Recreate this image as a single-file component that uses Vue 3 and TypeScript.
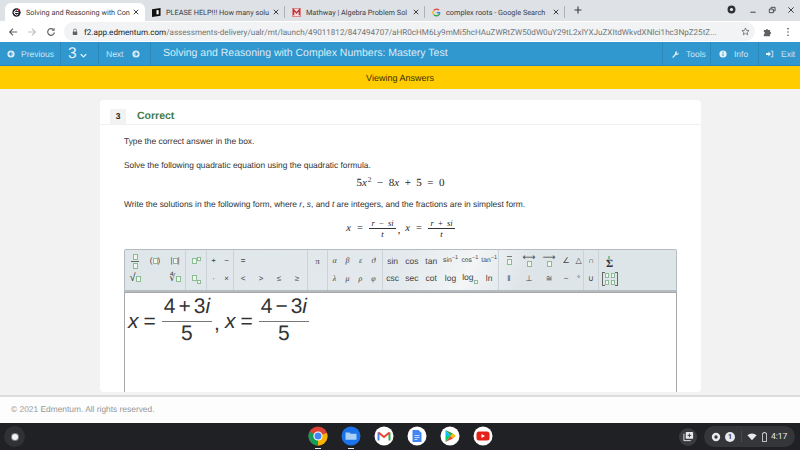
<template>
  <div class="screen">
    <!-- browser tabs -->
    <div class="tabstrip">
      <div v-for="(t, i) in tabs" :key="t.title" class="tab" :class="{ active: i === 0 }">
        <svg class="fav" viewBox="0 0 10 10">
          <template v-if="t.icon === 'e'">
            <circle cx="5" cy="5" r="4.600" fill="#1d1d2b" />
            <path d="M2.800 5h4.400M7 3.400A2.600 2.600 0 1 0 7 6.800" fill="none" stroke="#fff" stroke-width="1.100" />
            <circle cx="7.600" cy="2" r="1.200" fill="#d33" />
          </template>
          <template v-else-if="t.icon === 'book'">
            <path d="M0 1.500 9.500 0v8.500L0 10z" fill="#111" />
            <rect x="5" y="2.400" width="2.400" height="4.600" fill="#fff" />
          </template>
          <template v-else-if="t.icon === 'm'">
            <rect x=".3" y=".3" width="9.400" height="9.400" rx="1" fill="#f6dcdc" stroke="#c4343a" stroke-width=".7" />
            <path d="M1.800 8V2L5 5.500 8.200 2v6" fill="none" stroke="#c4343a" stroke-width="1.500" />
          </template>
          <template v-else>
            <path d="M9 5.200H5.200" fill="none" stroke="#4285f4" stroke-width="1.600" />
            <path d="M8.700 5.200A3.800 3.800 0 0 1 2.200 7.500" fill="none" stroke="#34a853" stroke-width="1.600" />
            <path d="M2.200 7.500a3.800 3.800 0 0 1 0-5" fill="none" stroke="#fbbc05" stroke-width="1.600" />
            <path d="M2.200 2.500A3.800 3.800 0 0 1 7.700 2.300" fill="none" stroke="#ea4335" stroke-width="1.600" />
          </template>
        </svg>
        <span class="tab-title">{{ t.title }}</span>
        <svg class="tab-x" viewBox="0 0 8 8"><path d="M1 1l6 6M7 1 1 7" stroke="#2a2b2e" stroke-width="1.200" /></svg>
      </div>
      <svg class="newtab" viewBox="0 0 9 9"><path d="M4.500 .5v8M.5 4.500h8" stroke="#3c4043" stroke-width="1.300" /></svg>
      <div class="winctl">
        <svg class="profile" viewBox="0 0 10 10">
          <circle cx="5" cy="5" r="4.400" fill="#2f3033" />
          <circle cx="5" cy="5" r="1.800" fill="#e8eaed" />
        </svg>
        <svg class="wbtn" viewBox="0 0 9 9"><path d="M1.500 7h6" stroke="#3c4043" stroke-width="1.100" /></svg>
        <svg class="wbtn" viewBox="0 0 9 9"><path d="M1.500 3.500h4.500v4h-4.500zM3.500 3.500v-2h4.500v4h-2" fill="none" stroke="#3c4043" stroke-width="1" /></svg>
        <svg class="wbtn" viewBox="0 0 9 9"><path d="M1.500 1.500l6 6M7.500 1.500l-6 6" stroke="#3c4043" stroke-width="1.100" /></svg>
      </div>
    </div>

    <!-- address bar -->
    <div class="toolbar">
      <svg class="nav" viewBox="0 0 12 12"><path d="M11 6H2M6 2 2 6l4 4" fill="none" stroke="#5f6368" stroke-width="1.400" /></svg>
      <svg class="nav" viewBox="0 0 12 12"><path d="M1 6h9M6 2l4 4-4 4" fill="none" stroke="#bdc1c6" stroke-width="1.400" /></svg>
      <svg class="nav" viewBox="0 0 12 12"><path d="M10 6.500A4 4 0 1 1 8.900 3.200" fill="none" stroke="#5f6368" stroke-width="1.400" /><path d="M10.300 1v3.400H6.900z" fill="#5f6368" /></svg>
      <div class="omnibox">
        <svg class="lock" viewBox="0 0 8 10"><path d="M2 4.500V3a2 2 0 0 1 4 0v1.500" fill="none" stroke="#5f6368" stroke-width="1" /><rect x="1" y="4.300" width="6" height="4.700" rx=".6" fill="#5f6368" /></svg>
        <span class="url"><b>f2.app.edmentum.com</b>/assessments-delivery/ualr/mt/launch/49011812/847494707/aHR0cHM6Ly9mMi5hcHAuZWRtZW50dW0uY29tL2xlYXJuZXItdWkvdXNlci1hc3NpZ25tZ...</span>
        <svg class="star" viewBox="0 0 12 12"><path d="M6 1.300 7.400 4.500l3.400.3-2.600 2.200.8 3.400L6 8.600 3 10.400l.8-3.400L1.200 4.800l3.400-.3z" fill="none" stroke="#5f6368" stroke-width="1" /></svg>
      </div>
      <svg class="ext" viewBox="0 0 12 12"><path d="M1 3.500h2.500a1.200 1.200 0 1 1 2.400 0h2.600v2.600a1.200 1.200 0 1 1 0 2.400v2.500H1V8.500a1.200 1.200 0 1 0 0-2.400z" fill="#5f6368" /></svg>
      <svg class="dots" viewBox="0 0 4 12"><circle cx="2" cy="2" r="1" fill="#5f6368" /><circle cx="2" cy="6" r="1" fill="#5f6368" /><circle cx="2" cy="10" r="1" fill="#5f6368" /></svg>
    </div>

    <!-- app header -->
    <div class="appbar">
      <div class="seg prev">
        <svg class="ico" viewBox="0 0 10 10"><circle cx="5" cy="5" r="4.500" fill="#dcecf6" /><path d="M5.500 2.800 3.200 5l2.300 2.200M3.400 5h4" fill="none" stroke="#3097cf" stroke-width="1.300" /></svg>
        <span>Previous</span>
      </div>
      <div class="seg num">
        <span class="big">3</span>
        <svg class="chev" viewBox="0 0 10 7"><path d="M1 1.500 5 5.500 9 1.500" fill="none" stroke="#f0f7fb" stroke-width="1.800" /></svg>
      </div>
      <div class="seg next">
        <span>Next</span>
        <svg class="ico" viewBox="0 0 10 10"><circle cx="5" cy="5" r="4.500" fill="#dcecf6" /><path d="M4.500 2.800 6.800 5 4.500 7.200M6.600 5h-4" fill="none" stroke="#3097cf" stroke-width="1.300" /></svg>
      </div>
      <div class="apptitle">Solving and Reasoning with Complex Numbers: Mastery Test</div>
      <div class="seg tool">
        <svg class="ico" viewBox="0 0 10 10"><path d="M1.500 9.200 5.200 4.800a2.300 2.300 0 0 1 3-3L6.800 3.200l.5 1 1 .4L9.600 3.200a2.400 2.400 0 0 1-3.300 2.800L2.700 9.900z" fill="#e8f3f9" /></svg>
        <span>Tools</span>
      </div>
      <div class="seg tool">
        <svg class="ico" viewBox="0 0 10 10"><circle cx="5" cy="5" r="4.500" fill="#e8f3f9" /><path d="M5 4.300v3.300M5 2v1.300" stroke="#3097cf" stroke-width="1.300" /></svg>
        <span>Info</span>
      </div>
      <div class="seg tool last">
        <svg class="ico" viewBox="0 0 10 10"><path d="M0 3.800h3V1.800L6.300 5 3 8.200V6.200H0zM6 1h3v8H6V8h2V2H6z" fill="#e8f3f9" /></svg>
        <span>Exit</span>
      </div>
    </div>
    <div class="banner">Viewing Answers</div>

    <!-- question -->
    <div class="page">
      <div class="card">
        <div class="card-head">
          <span class="qnum">3</span>
          <span class="status">Correct</span>
        </div>
        <div class="body">
          <p class="l1">Type the correct answer in the box.</p>
          <p class="l2">Solve the following quadratic equation using the quadratic formula.</p>
          <div class="eq">5<i>x</i><sup>2</sup>&nbsp;&nbsp;&minus;&nbsp;&nbsp;8<i>x</i>&nbsp;&nbsp;+&nbsp;&nbsp;5&nbsp;&nbsp;=&nbsp;&nbsp;0</div>
          <p class="l3">Write the solutions in the following form, where <i>r</i>, <i>s</i>, and <i>t</i> are integers, and the fractions are in simplest form.</p>
          <div class="eq form">
            <i>x</i><span class="rel">=</span><span class="frac"><span class="top"><i>r</i>&nbsp;&nbsp;&minus;&nbsp;&nbsp;<i>si</i></span><span class="bot"><i>t</i></span></span><span class="comma">,</span><i>x</i><span class="rel">=</span><span class="frac"><span class="top"><i>r</i>&nbsp;&nbsp;+&nbsp;&nbsp;<i>si</i></span><span class="bot"><i>t</i></span></span>
          </div>

          <!-- equation editor palette -->
          <div class="palette">
            <div v-for="g in groups" :key="g.name" class="group" :class="g.name">
              <span v-for="(c, i) in g.cells" :key="i" class="cell" v-html="c"></span>
            </div>
          </div>
          <div class="answer">
            <span class="ans-x">x</span><span class="ans-op">=</span>
            <span class="ans-frac"><span class="ans-top">4<span class="ans-sign">+</span>3<i>i</i></span><span class="ans-bot">5</span></span>
            <span class="ans-comma">,</span>
            <span class="ans-x">x</span><span class="ans-op">=</span>
            <span class="ans-frac"><span class="ans-top">4<span class="ans-sign">&minus;</span>3<i>i</i></span><span class="ans-bot">5</span></span>
          </div>
        </div>
      </div>
    </div>
    <div class="footer">© 2021 Edmentum. All rights reserved.</div>

    <!-- chromeos shelf -->
    <div class="shelf">
      <span class="launcher"><span></span></span>
      <div class="apps">
        <span class="app on">
          <svg viewBox="0 0 20 20">
            <circle cx="10" cy="10" r="9.500" fill="#db4437" />
            <path d="M10 10 1.800 14.800A9.500 9.500 0 0 0 10 19.500z" fill="#0f9d58" />
            <path d="M10 10 1.800 14.800A9.500 9.500 0 0 1 1.500 5.700z" fill="#0f9d58" />
            <path d="M10 10 19 7A9.500 9.500 0 0 1 10 19.500z" fill="#f4b400" />
            <circle cx="10" cy="10" r="4.600" fill="#fff" />
            <circle cx="10" cy="10" r="3.500" fill="#4285f4" />
          </svg>
        </span>
        <span class="app on">
          <svg viewBox="0 0 20 20">
            <circle cx="10" cy="10" r="9.500" fill="#1a73e8" />
            <path d="M4.500 6.500h4l1.200 1.300h5.800v6h-11z" fill="#a9d1f7" />
          </svg>
        </span>
        <span class="app">
          <svg viewBox="0 0 20 20">
            <circle cx="10" cy="10" r="9.500" fill="#fff" />
            <path d="M4.500 14.500V6.500" stroke="#4285f4" stroke-width="2" />
            <path d="M15.500 14.500V6.500" stroke="#34a853" stroke-width="2" />
            <path d="M4.500 6.500 10 11l5.500-4.500" fill="none" stroke="#ea4335" stroke-width="2" />
          </svg>
        </span>
        <span class="app">
          <svg viewBox="0 0 20 20">
            <circle cx="10" cy="10" r="9.500" fill="#fff" />
            <path d="M5.500 4h6l3 3v9h-9z" fill="#4285f4" />
            <path d="M7.500 9.500h5M7.500 11.500h5M7.500 13.500h3" stroke="#cfe0fc" stroke-width=".9" />
          </svg>
        </span>
        <span class="app">
          <svg viewBox="0 0 20 20">
            <circle cx="10" cy="10" r="9.500" fill="#fff" />
            <path d="M5.500 4v6h5z" fill="#00c3ff" />
            <path d="M5.500 16v-6h5z" fill="#00d36b" />
            <path d="M5.500 4l5 6 2.500-2.600z" fill="#34a853" />
            <path d="M5.500 16l5-6 2.500 2.600z" fill="#ea4335" />
            <path d="M13 7.400 16 10l-3 2.600L10.500 10z" fill="#fbbc05" />
          </svg>
        </span>
        <span class="app">
          <svg viewBox="0 0 20 20">
            <circle cx="10" cy="10" r="9.500" fill="#fff" />
            <rect x="3.500" y="5.500" width="13" height="9" rx="2.500" fill="#e62117" />
            <path d="M8.500 8v4l3.500-2z" fill="#fff" />
          </svg>
        </span>
      </div>
      <div class="tray">
        <span class="holding">
          <svg viewBox="0 0 12 12"><path d="M1 3v7.500h7.500" fill="none" stroke="#e8eaed" stroke-width="1" /><rect x="3" y="1" width="8" height="7.500" rx="1" fill="#e8eaed" /><path d="M7 2.800v4M5 4.800h4" stroke="#35363a" stroke-width="1" /></svg>
        </span>
        <div class="pill">
          <svg class="tray-ic" viewBox="0 0 12 12"><circle cx="6" cy="6" r="5" fill="#e8eaed" /><circle cx="6" cy="6" r="2" fill="#35363a" /></svg>
          <span class="badge">1</span>
          <span class="tray-sep"></span>
          <svg class="tray-ic" viewBox="0 0 12 12"><path d="M.5 4A8 8 0 0 1 11.500 4L6 10z" fill="#e8eaed" /></svg>
          <svg class="batt" viewBox="0 0 6 12"><path d="M2 .5h2v1h1.500v10h-5v-10H2z" fill="none" stroke="#e8eaed" stroke-width="1" /></svg>
          <span class="clock">4:17</span>
        </div>
      </div>
    </div>
  </div>
</template>

<script setup lang="ts">
interface Tab {
  title: string
  icon: 'e' | 'book' | 'm' | 'g'
}

// titles stop where the tab fades them out
const tabs: Tab[] = [
  { title: 'Solving and Reasoning with Con', icon: 'e' },
  { title: 'PLEASE HELP!!! How many solu', icon: 'book' },
  { title: 'Mathway | Algebra Problem Sol', icon: 'm' },
  { title: 'complex roots - Google Search', icon: 'g' }
]

// placeholder box used all over the palette
const ph = '<b class="ph"></b>'

const groups = [
  {
    name: 'g-frac',
    cells: [
      `<span class="mini-frac">${ph}<em></em>${ph}</span>`,
      `(${ph})`,
      `|${ph}|`,
      `<span class="root">√</span>${ph}`,
      '',
      `<small>∜</small>${ph}`
    ]
  },
  { name: 'g-pow', cells: [`${ph}<sup>${ph}</sup>`, `${ph}<sub>${ph}</sub>`] },
  { name: 'g-ops', cells: ['+', '−', '·', '×'] },
  { name: 'g-rel', cells: ['=', '', '', '', '&lt;', '&gt;', '≤', '≥'] },
  { name: 'g-pi', cells: ['π', ''] },
  { name: 'g-greek', cells: ['α', 'β', 'ε', 'ϑ', 'λ', 'μ', 'ρ', 'φ'] },
  {
    name: 'g-trig',
    cells: [
      'sin', 'cos', 'tan',
      'sin<sup>−1</sup>', 'cos<sup>−1</sup>', 'tan<sup>−1</sup>',
      'csc', 'sec', 'cot', 'log', `log<sub>${ph}</sub>`, 'ln'
    ]
  },
  {
    name: 'g-geo',
    cells: [
      `<span class="over">${ph}</span>`,
      `<span class="arr">⟷<br>${ph}</span>`,
      `<span class="arr">⟶<br>${ph}</span>`,
      '∠', '△',
      '‖', '⊥', '≅', '~', '°'
    ]
  },
  { name: 'g-set', cells: ['∩', '∪'] },
  {
    name: 'g-mat',
    cells: [
      `<span class="sigma"><b class="ph"></b>Σ</span>`,
      `<span class="matrix">${ph}${ph}${ph}${ph}</span>`
    ]
  }
]
</script>

<style>
html, body { margin: 0; background: #fff; overflow: hidden; }
.cell .ph {
  display: inline-block;
  box-sizing: border-box;
  width: 5px;
  height: 6px;
  border: 1px solid #8dbb93;
  background: #f0f6ef;
  vertical-align: -1px;
}
.cell sup, .cell sub { font-size: 5.500px; line-height: 0; }
.cell sup .ph, .cell sub .ph { width: 4px; height: 4px; }
.cell .mini-frac { display: inline-flex; flex-direction: column; align-items: center; gap: 1px; }
.cell .mini-frac em { width: 8px; height: 1px; background: #666; }
.cell .root { font-size: 11px; color: #333; }
.cell small { font-size: 10px; }
.cell .arr { display: inline-block; font-size: 9px; line-height: 6px; text-align: center; }
.cell .over { display: inline-block; border-top: 1px solid #777; padding-top: 1px; line-height: 8px; }
.cell .sigma {
  display: inline-flex;
  flex-direction: column;
  align-items: center;
  font: bold 11px/9px "Liberation Serif", serif;
  color: #333;
}
.cell .sigma .ph { width: 2px; height: 3px; margin-bottom: 1px; }
.cell .matrix {
  position: relative;
  display: inline-grid;
  grid-template-columns: 1fr 1fr;
  gap: 2px 2px;
  padding: 1px 2px;
  border-left: 1px solid #666;
  border-right: 1px solid #666;
}
.cell .matrix::before, .cell .matrix::after {
  content: "";
  position: absolute;
  top: 0;
  bottom: 0;
  width: 2px;
  border-top: 1px solid #666;
  border-bottom: 1px solid #666;
}
.cell .matrix::before { left: 0; }
.cell .matrix::after { right: 0; }
.cell .matrix .ph { width: 4px; height: 5px; }
</style>

<style scoped>
.screen {
  width: 800px;
  height: 450px;
  display: flex;
  flex-direction: column;
  overflow: hidden;
  font-family: "Liberation Sans", Arial, sans-serif;
  text-rendering: geometricPrecision;
}

/* browser chrome */
.tabstrip {
  height: 21px;
  flex: none;
  display: flex;
  align-items: flex-end;
  padding-left: 5px;
  background: #dee1e6;
  font-family: Roboto, sans-serif;
}
.tab {
  width: 140px;
  height: 18px;
  flex: none;
  box-sizing: border-box;
  display: flex;
  align-items: center;
  padding-left: 7px;
  position: relative;
}
.tab:not(.active)::after {
  content: "";
  position: absolute;
  right: 0;
  top: 3px;
  height: 12px;
  width: 1px;
  background: #aeb1b6;
}
.tab.active { background: #fff; border-radius: 6px 6px 0 0; }
.fav { width: 9px; height: 9px; flex: none; margin-right: 5px; }
.tab-title {
  width: 102px;
  flex: none;
  font-size: 7.300px;
  color: #3c4043;
  white-space: nowrap;
}
.tab-x { width: 6px; height: 6px; margin-left: 5px; flex: none; }
.newtab { width: 8px; height: 8px; margin: 0 0 7px 9px; }
.winctl {
  margin-left: auto;
  display: flex;
  align-items: center;
  gap: 11px;
  padding: 0 5px 7px 0;
}
.profile { width: 9px; height: 9px; margin-right: 2.500px; }
.wbtn { width: 8px; height: 8px; }

.toolbar {
  height: 21px;
  flex: none;
  display: flex;
  align-items: center;
  padding-left: 8px;
  background: #fff;
}
.nav { width: 10px; height: 10px; margin-right: 9px; flex: none; }
.omnibox {
  width: 691px;
  height: 19px;
  flex: none;
  box-sizing: border-box;
  margin-left: -1px;
  display: flex;
  align-items: center;
  padding: 0 5px 0 8px;
  border-radius: 10px;
  background: #f1f3f4;
}
.lock { width: 6px; height: 8px; flex: none; margin-right: 6px; }
.url {
  width: 643px;
  flex: none;
  font: 8.100px Roboto, sans-serif;
  color: #6f7377;
  white-space: nowrap;
  overflow: hidden;
}
.url b { font-weight: 400; color: #202124; }
.star { width: 9px; height: 9px; margin-left: auto; flex: none; }
.ext { width: 10px; height: 10px; margin-left: 8px; flex: none; }
.dots { width: 4px; height: 10px; margin-left: 13px; flex: none; }

/* app header */
.appbar {
  height: 24px;
  flex: none;
  box-sizing: border-box;
  display: flex;
  background: #3097cf;
  border-bottom: 1px solid #2b86b6;
  color: #cfe6f3;
  font-size: 8.500px;
}
.seg {
  display: flex;
  align-items: center;
  box-sizing: border-box;
  border-right: 1px solid #2a88bb;
}
.prev { width: 61px; padding-left: 7px; gap: 6px; }
.num { width: 38px; padding-left: 7px; gap: 3px; }
.big { font-size: 15.500px; color: #eaf4fa; }
.chev { width: 7px; height: 5px; margin-top: 3px; }
.next { width: 52px; padding-left: 7px; gap: 9px; }
.ico { width: 8px; height: 8px; flex: none; }
.apptitle {
  flex: 1;
  padding-left: 12px;
  line-height: 23px;
  font-size: 10.500px;
  color: #dcecf6;
}
.tool {
  width: 48px;
  padding-left: 8px;
  gap: 7px;
  border-right: 0;
  border-left: 1px solid #2a88bb;
}
.tool.last { width: 42px; padding-left: 7px; }

.banner {
  height: 23px;
  flex: none;
  display: flex;
  align-items: center;
  justify-content: center;
  background: #ffcc00;
  color: #3a3000;
  font-size: 9px;
}

/* question area */
.page {
  height: 308px;
  flex: none;
  box-sizing: border-box;
  padding: 11px 99px 0 100px;
  overflow: hidden;
  background: #f2f2f2;
  border-bottom: 2px solid #dcdcdc;
}
.card {
  height: 292px;
  overflow: hidden;
  background: #fff;
  border-radius: 4px;
}
.card-head {
  height: 25px;
  box-sizing: border-box;
  display: flex;
  align-items: flex-end;
  padding-left: 10px;
  border-bottom: 1px solid #f0f0f0;
}
.qnum {
  width: 16px;
  height: 15px;
  background: #f2f2f2;
  font-size: 8.500px;
  font-weight: 700;
  line-height: 15px;
  text-align: center;
  color: #222;
}
.status {
  margin: 0 0 2px 11px;
  font-size: 10.500px;
  font-weight: 700;
  color: #3f7a4a;
}
.body { padding: 0 24px; color: #333; font-size: 8.400px; }
p { margin: 0; line-height: 12px; }
.l1 { padding-top: 10px; }
.l2 { padding-top: 12px; }
.l3 { padding-top: 3px; }
.eq {
  height: 24px;
  display: flex;
  align-items: center;
  justify-content: center;
  font: 11px "Liberation Serif", serif;
  white-space: pre;
  color: #222;
}
.eq sup { font-size: 7.500px; line-height: 0; margin: 0 0 6px 1px; }
.form { padding-top: 6px; font-size: 10.500px; }
.rel { margin: 0 6.500px 0 6px; }
.comma { margin: 4px 5px 0 2px; }
.frac { display: inline-flex; flex-direction: column; align-items: center; font-size: 8.500px; }
.top { padding: 0 2px; border-bottom: 1px solid #333; line-height: 10px; }
.bot { line-height: 10px; }

/* equation palette */
.palette {
  height: 43px;
  margin-top: 9px;
  box-sizing: border-box;
  display: flex;
  border: 1px solid #b4bcc2;
  border-bottom-width: 2px;
  border-radius: 2px 2px 0 0;
  background: linear-gradient(112deg, #dfe6ea 0%, #e3e9ec 50%, #f3f5f6 62%, #dee5e9 72%);
  font-size: 8px;
  color: #444;
}
.group {
  box-sizing: border-box;
  display: grid;
  grid-template-rows: 1fr 1fr;
  align-items: center;
  justify-items: center;
  padding: 2px 0 3px;
  border-right: 1px solid #ccd3d8;
}
.cell { white-space: nowrap; }
.g-frac { width: 61px; grid-template-columns: repeat(3, 20px); }
.g-pow { width: 21px; }
.g-ops { width: 27px; grid-template-columns: 13px 13px; }
.g-rel { width: 74px; grid-template-columns: repeat(4, 18px); }
.g-pi { width: 20px; font-family: "Liberation Serif", serif; font-size: 9px; }
.g-greek { width: 55px; grid-template-columns: repeat(4, 13px); font: italic 8px "Liberation Serif", serif; }
.g-trig { width: 116px; grid-template-columns: repeat(6, 19.300px); font-size: 8.500px; }
.g-trig .cell:nth-child(n+4):nth-child(-n+6) { font-size: 6.800px; }
.g-geo { width: 85px; grid-template-columns: 20px 20px 20px 14px 11px; }
.g-set { width: 15px; }
.g-mat { flex: 1; border-right: 0; padding-right: 56px; }

/* answer box */
.answer {
  height: 120px;
  box-sizing: border-box;
  display: flex;
  align-items: flex-start;
  padding: 6px 0 0 3px;
  border: 1px solid #a8a8a8;
  border-bottom: 0;
  font-size: 21px;
  color: #333;
}
.ans-x { font-style: italic; line-height: 46px; }
.ans-op { margin: 0 6px 0 5px; line-height: 46px; }
.ans-frac { display: inline-flex; flex-direction: column; align-items: center; }
.ans-top {
  padding: 0 2px 6px;
  border-bottom: 1px solid #777;
  line-height: 16px;
  white-space: nowrap;
}
.ans-sign { margin: 0 3px; }
.ans-bot { line-height: 24px; }
.ans-comma { margin: 0 5px 0 2px; line-height: 50px; }

.footer {
  height: 26px;
  flex: none;
  box-sizing: border-box;
  padding: 7px 0 0 11px;
  background: #fdfdfd;
  color: #969696;
  font-size: 8.400px;
}

/* shelf */
.shelf {
  flex: 1;
  display: flex;
  align-items: center;
  background: #202124;
  position: relative;
}
.launcher {
  width: 21px;
  height: 21px;
  margin-left: 4px;
  display: flex;
  align-items: center;
  justify-content: center;
  border-radius: 50%;
  background: #303135;
}
.launcher span { width: 6px; height: 6px; border-radius: 50%; background: #f1f3f4; box-shadow: 0 0 0 1px #7c7e82; }
.apps {
  position: absolute;
  left: 308px;
  top: 3px;
  display: flex;
  gap: 13px;
}
.app { width: 20px; height: 20px; position: relative; }
.app svg { width: 20px; height: 20px; display: block; }
.app.on::after {
  content: "";
  position: absolute;
  left: 7px;
  bottom: -3px;
  width: 6px;
  height: 1.500px;
  background: #e8eaed;
}
.tray { margin-left: auto; display: flex; align-items: center; padding-right: 5px; gap: 7px; }
.holding {
  width: 18px;
  height: 18px;
  display: flex;
  align-items: center;
  justify-content: center;
  border-radius: 50%;
  background: #3a3b3f;
}
.holding svg { width: 11px; height: 11px; }
.pill {
  width: 91px;
  height: 21px;
  box-sizing: border-box;
  display: flex;
  align-items: center;
  padding-left: 7px;
  border-radius: 11px;
  background: #35363a;
  color: #e8eaed;
}
.tray-ic { width: 10px; height: 10px; flex: none; }
.badge {
  width: 10px;
  height: 10px;
  margin-left: 4px;
  border-radius: 50%;
  background: #e8eaed;
  color: #35363a;
  font: 700 7px/10px Roboto, sans-serif;
  text-align: center;
}
.tray-sep { width: 1px; height: 11px; margin: 0 5px 0 6px; background: #4a4b4f; }
.batt { width: 5px; height: 10px; margin-left: 5px; flex: none; }
.clock { margin-left: 4px; font: 8.500px Roboto, sans-serif; }
</style>
